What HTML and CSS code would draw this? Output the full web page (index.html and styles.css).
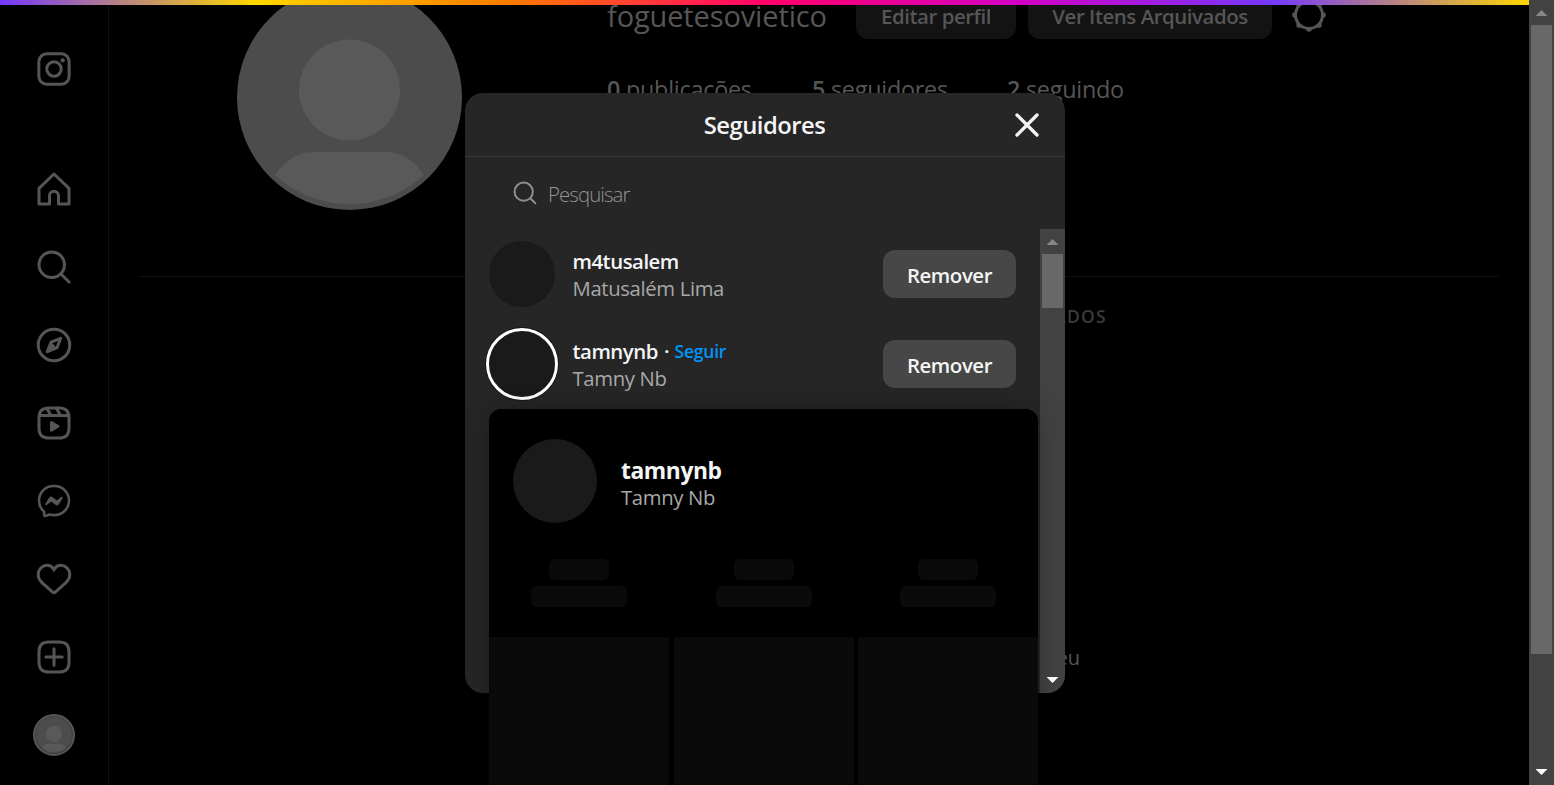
FILE: index.html
```html
<!DOCTYPE html>
<html lang="pt-BR">
<head>
<meta charset="utf-8">
<title>Seguidores</title>
<link rel="stylesheet" href="styles.css">
</head>
<body>
<div class="page">
  <nav class="sidebar">
    <svg class="icon logo" viewBox="0 0 24 24"><rect x="1.9" y="1.9" width="20.2" height="20.2" rx="5.2"/><circle cx="12" cy="12" r="4.8"/><circle class="solid" cx="17.8" cy="6.2" r="1.4"/></svg>
    <svg class="icon" viewBox="0 0 24 24"><path stroke-linejoin="round" d="M9.005 16.545a2.997 2.997 0 0 1 2.997-2.997A2.997 2.997 0 0 1 15 16.545V22h7V11.543L12 2 2 11.543V22h7.005Z"/></svg>
    <svg class="icon" viewBox="0 0 24 24"><path d="M19 10.5A8.5 8.5 0 1 1 10.5 2a8.5 8.5 0 0 1 8.5 8.5Z"/><path stroke-linecap="round" d="M16.511 16.511 22 22"/></svg>
    <svg class="icon" viewBox="0 0 24 24"><path stroke-linejoin="round" d="m13.941 13.953-6.36 2.471 2.479-6.368 6.36-2.471Z"/><path class="solid" d="m10.06 10.056 3.889 3.889-6.368 2.479Z"/><circle cx="12" cy="12" r="10.5"/></svg>
    <svg class="icon" viewBox="0 0 24 24"><path d="M2.049 7.002H21.95M13.504 2.001l2.858 5.001M7.207 2.11l2.795 4.892"/><path d="M2 12.001v3.449c0 2.849.698 4.006 1.606 4.945.94.908 2.098 1.607 4.946 1.607h6.896c2.848 0 4.006-.699 4.946-1.607.908-.939 1.606-2.096 1.606-4.945V8.552c0-2.848-.698-4.006-1.606-4.945C19.454 2.699 18.296 2 15.448 2H8.552c-2.848 0-4.006.699-4.946 1.607C2.698 4.546 2 5.704 2 8.552Z"/><path class="solid" d="M9.763 17.664a.908.908 0 0 1-.454-.787V11.63a.909.909 0 0 1 1.364-.788l4.545 2.624a.909.909 0 0 1 0 1.575l-4.545 2.624a.91.91 0 0 1-.91 0Z"/></svg>
    <svg class="icon" viewBox="0 0 24 24"><path stroke-width="1.739" d="M12.003 2.001a9.705 9.705 0 1 1 0 19.4 10.876 10.876 0 0 1-2.895-.384.798.798 0 0 0-.533.04l-1.984.876a.801.801 0 0 1-1.123-.708l-.054-1.78a.806.806 0 0 0-.27-.569 9.49 9.49 0 0 1-3.14-7.175 9.65 9.65 0 0 1 10-9.7Z"/><path class="solid" d="M17.79 10.132a.659.659 0 0 0-.962-.873l-2.556 2.05a.63.63 0 0 1-.758.002L11.06 9.47a1.576 1.576 0 0 0-2.277.42l-2.567 3.98a.659.659 0 0 0 .961.875l2.556-2.049a.63.63 0 0 1 .759-.002l2.452 1.84a1.576 1.576 0 0 0 2.278-.42Z"/></svg>
    <svg class="icon" viewBox="0 0 24 24"><path class="solid" d="M16.792 3.904A4.989 4.989 0 0 1 21.5 9.122c0 3.072-2.652 4.959-5.197 7.222-2.512 2.243-3.865 3.469-4.303 3.752-.477-.309-2.143-1.823-4.303-3.752C5.141 14.072 2.5 12.167 2.5 9.122a4.989 4.989 0 0 1 4.708-5.218 4.21 4.21 0 0 1 3.675 1.941c.84 1.175.98 1.763 1.12 1.763s.278-.588 1.11-1.766a4.17 4.17 0 0 1 3.679-1.938Zm0-2a6.04 6.04 0 0 0-4.797 2.127 6.052 6.052 0 0 0-4.787-2.127A6.985 6.985 0 0 0 .5 9.122c0 3.61 2.55 5.827 5.015 7.97.283.246.569.494.853.747l1.027.918a44.998 44.998 0 0 0 3.518 3.018 2 2 0 0 0 2.174 0 45.263 45.263 0 0 0 3.626-3.115l.922-.824c.293-.26.59-.519.885-.774 2.334-2.025 4.98-4.32 4.98-7.94a6.985 6.985 0 0 0-6.708-7.218Z"/></svg>
    <svg class="icon" viewBox="0 0 24 24"><path d="M2 12v3.45c0 2.849.698 4.005 1.606 4.944.94.909 2.098 1.608 4.946 1.608h6.896c2.848 0 4.006-.7 4.946-1.608C21.302 19.455 22 18.3 22 15.45V8.552c0-2.849-.698-4.006-1.606-4.945C19.454 2.7 18.296 2 15.448 2H8.552c-2.848 0-4.006.699-4.946 1.607C2.698 4.547 2 5.703 2 8.552Z"/><path stroke-linecap="round" d="M6.545 12.001h10.91M12.003 6.545v10.91"/></svg>
    <div class="me"><svg viewBox="0 0 225 225"><circle class="face-bg" cx="112.5" cy="112.5" r="112.5"/><circle class="face" cx="112.5" cy="105" r="50.5"/><path class="face" d="M38 190Q54 167 76 167H149Q171 167 187 190A110 110 0 0 1 38 190Z"/></svg></div>
  </nav>
  <main class="profile">
    <header class="profile-head">
      <svg class="avatar" viewBox="0 0 225 225"><circle class="face-bg" cx="112.5" cy="112.5" r="112.5"/><circle class="face" cx="112.5" cy="105" r="50.5"/><path class="face" d="M38 190Q54 167 76 167H149Q171 167 187 190A110 110 0 0 1 38 190Z"/></svg>
      <div class="info">
        <div class="name-row">
          <h2 class="username">foguetesovietico</h2>
          <div class="btn edit"><span>Editar perfil</span></div>
          <div class="btn archive"><span>Ver Itens Arquivados</span></div>
          <svg class="gear" viewBox="0 0 36 36"><circle cx="18" cy="18" r="15"/><g><circle cx="18" cy="4" r="2.8"/><circle cx="27.9" cy="8.1" r="2.8"/><circle cx="32" cy="18" r="2.8"/><circle cx="27.9" cy="27.9" r="2.8"/><circle cx="18" cy="32" r="2.8"/><circle cx="8.1" cy="27.9" r="2.8"/><circle cx="4" cy="18" r="2.8"/><circle cx="8.1" cy="8.1" r="2.8"/></g><circle class="hole" cx="18" cy="18" r="12"/></svg>
        </div>
        <div class="stats">
          <span class="s1"><b>0</b> publicações</span><span class="s2"><b>5</b> seguidores</span><span class="s3"><b>2</b> seguindo</span>
        </div>
      </div>
    </header>
    <div class="tabs"><span>MARCADOS</span></div>
    <p class="empty-note">seu</p>
  </main>
  <div class="scrollbar page-scroll"><i class="up"></i><div class="thumb"></div><i class="down"></i></div>
</div>
<div class="rainbow"></div>

<section class="modal">
  <header class="modal-head">
    <h1>Seguidores</h1>
    <svg class="close" viewBox="0 0 24 24"><path d="M2 2 22 22M22 2 2 22"/></svg>
  </header>
  <div class="search">
    <svg viewBox="0 0 24 24"><circle cx="10.7" cy="10.7" r="9.1"/><path d="m17.3 17.3 5 5"/></svg>
    <span>Pesquisar</span>
  </div>
  <div class="list">
    <div class="rows">
      <div class="row">
        <div class="pic"></div>
        <div class="who"><strong>m4tusalem</strong><small>Matusalém Lima</small></div>
        <div class="btn remove"><span>Remover</span></div>
      </div>
      <div class="row">
        <div class="pic story"></div>
        <div class="who"><strong><span>tamnynb</span><span class="dot">·</span><span class="follow">Seguir</span></strong><small>Tamny Nb</small></div>
        <div class="btn remove"><span>Remover</span></div>
      </div>
    </div>
    <div class="scrollbar"><i class="up"></i><div class="thumb"></div><i class="down"></i></div>
  </div>
</section>

<aside class="card">
  <div class="card-head">
    <div class="card-pic"></div>
    <div class="card-who"><strong>tamnynb</strong><small>Tamny Nb</small></div>
  </div>
  <div class="bones">
    <div><i></i><i></i></div><div><i></i><i></i></div><div><i></i><i></i></div>
  </div>
  <div class="tiles"><i></i><i></i><i></i></div>
</aside>
</body>
</html>
```
FILE: styles.css
```css
* { box-sizing: border-box; }
html, body { margin: 0; height: 785px; overflow: hidden; background: #000; }
body { font-family: "Open Sans", "Noto Sans", sans-serif; position: relative; }
h1, h2, p { margin: 0; }
svg { display: block; flex: none; }
span, strong, small, h1, h2, p { white-space: nowrap; }

.page { display: flex; height: 785px; overflow: hidden; color: #565656; }

/* navigation rail */
.sidebar { width: 109px; flex: none; border-right: 1px solid #0f0f0f; display: flex; flex-direction: column; align-items: center; gap: 42px; padding-top: 51px; }
.icon { width: 36px; height: 36px; fill: none; stroke: #565656; stroke-width: 2; }
.icon .solid { fill: #565656; stroke: none; }
.logo { margin-bottom: 42px; stroke-width: 2; }
.logo + .icon { margin-bottom: -.5px; }
.me { width: 42px; height: 42px; margin-top: -3px; border: 2.5px solid #565656; border-radius: 50%; padding: 1px; background: #3f3f3f; }
.me svg { width: 36px; height: 36px; }
.face-bg { fill: #4c4c4c; }
.face { fill: #595959; }

/* profile */
.profile { flex: 1; padding: 0 29px; margin-top: -15px; }
.profile-head { display: flex; height: 291px; padding-left: 99px; }
.avatar { width: 225px; height: 225px; }
.info { padding-left: 145px; }
.name-row { display: flex; height: 54px; align-items: flex-end; }
.username { width: 249px; height: 54px; font-size: 29px; font-weight: 400; line-height: 62px; letter-spacing: -.13px; }
.btn { display: flex; align-items: center; justify-content: center; height: 48px; border-radius: 12px; font-weight: 600; background: #131313; font-size: 20.4px; letter-spacing: -.44px; }
.edit { width: 160px; margin-right: 12px; }
.archive { width: 244px; margin-right: 19px; }
.name-row .btn span { position: relative; top: 1px; }
.gear { width: 36px; height: 36px; margin-bottom: 6px; }
.gear circle { fill: #565656; }
.gear .hole { fill: #000; }
.stats { display: flex; margin-top: 32px; font-size: 23.4px; line-height: 36px; letter-spacing: -.25px; }
.stats b { font-weight: 600; }
.s1 { width: 205px; }
.s2 { width: 195px; }
.tabs { border-top: 1px solid #0f0f0f; margin-left: 1px; padding-right: 393px; text-align: right; font-size: 17.5px; line-height: 24px; letter-spacing: 1.3px; padding-top: 27px; font-weight: 600; color: #3b3b3b; }
.empty-note { padding-top: 313px; padding-right: 420px; font-size: 20px; line-height: 33px; text-align: right; }

.rainbow { position: absolute; left: 0; top: 0; width: 1529px; height: 5px; background: linear-gradient(90deg, #7638fa, #ffd600, #ff7a00, #ff0169, #d300c5, #7638fa, #ffd600); }

/* scrollbars */
.scrollbar { width: 25px; flex: none; background: #424242; display: flex; flex-direction: column; align-items: center; }
.scrollbar .thumb { width: 21px; height: 54px; background: #686868; }
.page-scroll .thumb { height: 629px; }
.up, .down { width: 12px; height: 6px; flex: none; background: #868686; clip-path: polygon(50% 0, 100% 100%, 0 100%); margin: 10px 0 9px; }
.down { background: #fff; clip-path: polygon(0 0, 100% 0, 50% 100%); margin: auto 0 10px; }

/* dialog */
.modal { position: absolute; left: 465px; top: 93px; width: 600px; height: 600px; border-radius: 18px; overflow: hidden; background: #262626; color: #f5f5f5; }
.modal-head { display: flex; align-items: center; justify-content: center; height: 64px; border-bottom: 1px solid #363636; padding-left: 49px; }
h1 { width: 500px; text-align: center; font-size: 23.8px; font-weight: 600; line-height: 34px; letter-spacing: -.5px; padding-top: 1px; }
.close { width: 24px; height: 24px; margin-right: 26px; fill: none; stroke: #f5f5f5; stroke-width: 3.3; stroke-linecap: round; }
.search { height: 72px; display: flex; align-items: center; gap: 11px; padding-left: 48px; color: #949494; font-size: 20.4px; letter-spacing: -.9px; font-weight: 300; }
.search span { padding-top: 2px; }
.search svg { width: 24px; height: 24px; fill: none; stroke: #8e8e8e; stroke-width: 2; stroke-linecap: round; }
.list { display: flex; height: 464px; }
.rows { flex: 1; }
.row { display: flex; align-items: center; height: 90px; padding: 0 24px; }
.pic { width: 66px; height: 66px; border-radius: 50%; background: #1a1a1a; margin-right: 17.5px; }
.story { outline: 3px solid #fff; outline-offset: -.6px; box-shadow: 0 0 0 4px #151515; }
.who, .card-who { flex: 1; display: flex; flex-direction: column; font-size: 20.4px; line-height: 27px; letter-spacing: -.5px; }
.who { padding-top: 2px; }
.who strong { display: flex; font-weight: 600; }
small { font-size: 20.3px; letter-spacing: -.35px; color: #a8a8a8; }
.dot { padding: 0 5.5px 0 6px; }
.follow { color: #0095f6; font-size: 17.5px; font-weight: 600; letter-spacing: -.2px; }
.remove { width: 133px; background: #474747; }
.remove span { padding-top: 2px; }

/* hover card */
.card { position: absolute; left: 489px; top: 409px; width: 549px; height: 376px; border-radius: 12px 12px 0 0; overflow: hidden; background: #000; color: #f5f5f5; box-shadow: 0 0 24px rgba(0, 0, 0, .25); }
.card-head { display: flex; align-items: center; gap: 24px; height: 144.4px; padding-left: 24px; }
.card-pic { width: 84px; height: 84px; border-radius: 50%; background: #1a1a1a; }
.card-who { padding-top: 6px; }
.card-who strong { font-size: 22.8px; font-weight: 700; letter-spacing: -.4px; }
.bones { display: grid; grid-template-columns: repeat(3, 1fr); column-gap: 4.5px; height: 84px; padding-top: 6px; }
.bones div { display: flex; flex-direction: column; align-items: center; gap: 6px; }
.bones i { width: 60px; height: 21px; border-radius: 6px; background: #0a0a0a; }
.bones i + i { width: 96px; }
.tiles { display: grid; grid-template-columns: repeat(3, 1fr); column-gap: 4.5px; height: 148px; }
.tiles i { background: #0a0a0a; }
```
